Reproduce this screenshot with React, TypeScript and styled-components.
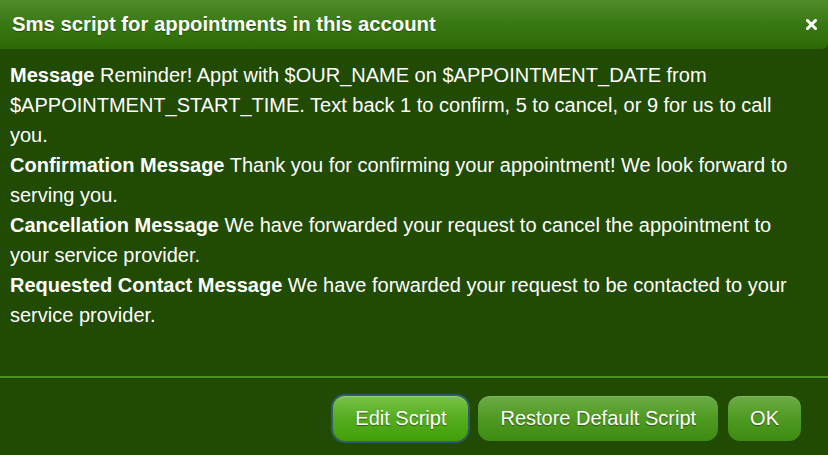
import React from 'react';
import styled, { createGlobalStyle, css } from 'styled-components';

const GlobalStyle = createGlobalStyle`
  html, body {
    margin: 0;
    padding: 0;
    background: #214a02;
  }
  body {
    font-family: 'Liberation Sans', Arial, sans-serif;
  }
`;

const Dialog = styled.div`
  width: 828px;
  height: 455px;
  display: flex;
  flex-direction: column;
  background: #214a02;
  color: #ffffff;
  overflow: hidden;
`;

const TitleBar = styled.div`
  height: 49px;
  flex: none;
  display: flex;
  align-items: center;
  justify-content: space-between;
  padding: 0 12px 0 12px;
  background: linear-gradient(to bottom, #508c2c 0%, #3a7a14 45%, #2c6a06 100%);
  border-bottom-right-radius: 6px;
`;

const Title = styled.h1`
  margin: 0;
  font-size: 20.3px;
  font-weight: bold;
  color: #ffffff;
  text-shadow: 0 1px 1px rgba(0, 0, 0, 0.35);
`;

const CloseButton = styled.button`
  all: unset;
  display: flex;
  align-items: center;
  justify-content: center;
  width: 14px;
  height: 14px;
  margin-right: -2px;
  cursor: pointer;
`;

const Body = styled.div`
  flex: 1;
  padding: 11px 24px 0 10px;
  font-size: 20px;
  line-height: 30px;
`;

const Entry = styled.p`
  margin: 0;
`;

const Label = styled.strong`
  font-weight: bold;
`;

const Separator = styled.hr`
  margin: 0;
  border: none;
  height: 2px;
  background: #4b9220;
  flex: none;
`;

const Footer = styled.div`
  flex: none;
  display: flex;
  justify-content: flex-end;
  align-items: center;
  gap: 10px;
  padding: 18px 27px 14px 0;
`;

const Button = styled.button<{ $focused?: boolean }>`
  all: unset;
  box-sizing: border-box;
  height: 45px;
  padding: 0 22px;
  display: inline-flex;
  align-items: center;
  border-radius: 12px;
  font-family: 'Liberation Sans', Arial, sans-serif;
  font-size: 20px;
  color: #ffffff;
  text-shadow: 0 1px 1px rgba(0, 0, 0, 0.45);
  background: linear-gradient(to bottom, #6cab47 0%, #4f9a22 50%, #3e8b12 100%);
  box-shadow: inset 0 1px 0 rgba(255, 255, 255, 0.15);
  cursor: pointer;
  ${(p) =>
    p.$focused &&
    css`
      background: linear-gradient(to bottom, #78c24a 0%, #55ac1e 50%, #41a00a 100%);
      box-shadow: 0 0 0 2px #2f5b6c, inset 0 1px 0 rgba(255, 255, 255, 0.2);
    `}
`;

const messages = [
  {
    label: 'Message',
    text: 'Reminder! Appt with $OUR_NAME on $APPOINTMENT_DATE from $APPOINTMENT_START_TIME. Text back 1 to confirm, 5 to cancel, or 9 for us to call you.',
  },
  {
    label: 'Confirmation Message',
    text: 'Thank you for confirming your appointment! We look forward to serving you.',
  },
  {
    label: 'Cancellation Message',
    text: 'We have forwarded your request to cancel the appointment to your service provider.',
  },
  {
    label: 'Requested Contact Message',
    text: 'We have forwarded your request to be contacted to your service provider.',
  },
];

export default function App() {
  return (
    <>
      <GlobalStyle />
      <Dialog>
        <TitleBar>
          <Title>Sms script for appointments in this account</Title>
          <CloseButton aria-label="close">
            <svg width="11" height="11" viewBox="0 0 11 11">
              <path d="M1.5 1.5 L9.5 9.5 M9.5 1.5 L1.5 9.5" stroke="#ffffff" strokeWidth="3" strokeLinecap="square" />
            </svg>
          </CloseButton>
        </TitleBar>
        <Body>
          {messages.map((m) => (
            <Entry key={m.label}>
              <Label>{m.label}</Label> {m.text}
            </Entry>
          ))}
        </Body>
        <Separator />
        <Footer>
          <Button $focused>Edit Script</Button>
          <Button>Restore Default Script</Button>
          <Button>OK</Button>
        </Footer>
      </Dialog>
    </>
  );
}
